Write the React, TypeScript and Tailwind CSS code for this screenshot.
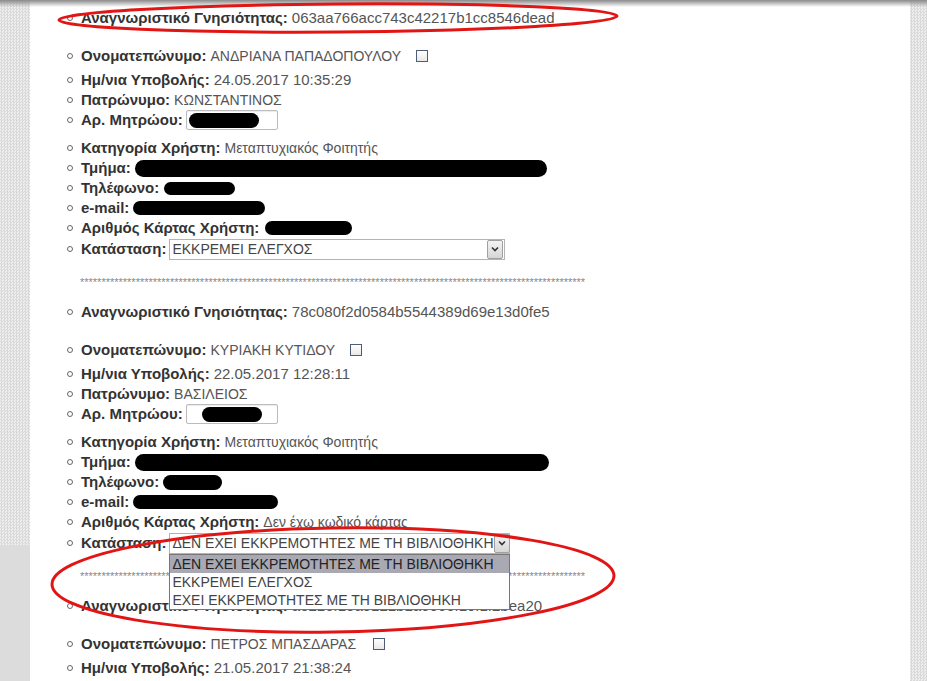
import React from 'react';

const checker =
  'bg-[repeating-conic-gradient(#d9d9d9_0%_25%,#eeeeee_0%_50%)] bg-[length:3px_3px]';

interface RowProps {
  label: string;
  children?: React.ReactNode;
  className?: string;
}

const Row = ({ label, children, className = '' }: RowProps) => (
  <li className={`flex h-5 items-center whitespace-nowrap ${className}`}>
    <span className="ml-[37px] mr-[8px] h-[6px] w-[6px] shrink-0 rounded-full border border-[#666]" />
    <span className="font-bold text-[#333]">{label}</span>
    <span className="ml-[4px] flex items-center text-[#555]">{children}</span>
  </li>
);

// greek values render a bit narrower than the digits in the shot
const G = ({ children }: { children: React.ReactNode }) => (
  <span className="text-[14px]">{children}</span>
);

const Blob = ({ w, h, ml = 0 }: { w: number; h: number; ml?: number }) => (
  <span
    className="inline-block rounded-full bg-black"
    style={{ width: w, height: h, marginLeft: ml }}
  />
);

const Checkbox = ({ ml }: { ml: number }) => (
  <span
    className="inline-block h-[12px] w-[12px] border border-[#4d5d75] bg-gradient-to-b from-white to-[#e8e8e8]"
    style={{ marginLeft: ml }}
  />
);

const Arrow = () => (
  <span className="flex h-[19px] w-[16px] shrink-0 items-center justify-center rounded-[2px] border border-[#a0a0a0] bg-gradient-to-b from-[#f4f4f4] to-[#d6d6d6]">
    <svg width="8" height="6" viewBox="0 0 8 6">
      <path d="M1 1.5 L4 4.5 L7 1.5" fill="none" stroke="#333" strokeWidth="1.6" />
    </svg>
  </span>
);

const options = [
  'ΔΕΝ ΕΧΕΙ ΕΚΚΡΕΜΟΤΗΤΕΣ ΜΕ ΤΗ ΒΙΒΛΙΟΘΗΚΗ',
  'ΕΚΚΡΕΜΕΙ ΕΛΕΓΧΟΣ',
  'ΕΧΕΙ ΕΚΚΡΕΜΟΤΗΤΕΣ ΜΕ ΤΗ ΒΙΒΛΙΟΘΗΚΗ',
];

const Select = ({ value, width, open = false }: { value: string; width: number; open?: boolean }) => (
  <span className="relative ml-[-1px] inline-block text-[14px]" style={{ width }}>
    <span className="flex h-[21px] items-center justify-between border border-[#b4b4b4] bg-white pl-[2px] pr-[1px] text-[#444]">
      <span>{value}</span>
      <Arrow />
    </span>
    {open && (
      <span className="absolute left-0 top-full z-10 flex w-full flex-col border border-[#777] bg-white text-[#444]">
        {options.map((o, i) => (
          <span
            key={o}
            className={`h-[18px] pl-[2px] leading-[18px] ${i === 0 ? 'bg-[#a9a9b3] text-[#222]' : ''}`}
          >
            {o}
          </span>
        ))}
      </span>
    )}
  </span>
);

const Stars = () => (
  <li className="mt-[13px] flex h-5 items-center">
    <span className="ml-[50px] w-[505px] overflow-hidden whitespace-nowrap text-[11px] leading-[11px] text-[#888]">
      {'*'.repeat(118)}
    </span>
  </li>
);

const AmInput = ({ blob }: { blob: { ml: number; w: number } }) => (
  <span className="ml-[-1px] flex h-[20px] w-[92px] items-center rounded-[2px] border border-[#bcbcbc] bg-white shadow-[inset_0_1px_1px_rgba(0,0,0,0.08)]">
    <Blob w={blob.w} h={15} ml={blob.ml} />
  </span>
);

export default function App() {
  return (
    <div
      className="relative flex h-[681px] w-[927px] overflow-hidden bg-white text-[15px]"
      style={{ fontFamily: '"Liberation Sans", Arial, sans-serif' }}
    >
      <div className="flex w-[30px] shrink-0 flex-col">
        <div className={`flex-1 ${checker}`} />
        <div className="h-[136px] bg-[#dcdcdc]" />
      </div>

      <div className="flex-1 bg-white">
        <ul className="pt-[8px]">
          {/* record 1 */}
          <Row label="Αναγνωριστικό Γνησιότητας:">063aa766acc743c42217b1cc8546dead</Row>
          <Row label="Ονοματεπώνυμο:" className="mt-[18px]">
            <G>ΑΝΔΡΙΑΝΑ ΠΑΠΑΔΟΠΟΥΛΟΥ</G>
            <Checkbox ml={15} />
          </Row>
          <Row label="Ημ/νια Υποβολής:" className="mt-[4px]">24.05.2017 10:35:29</Row>
          <Row label="Πατρώνυμο:"><G>ΚΩΝΣΤΑΝΤΙΝΟΣ</G></Row>
          <Row label="Αρ. Μητρώου:">
            <AmInput blob={{ ml: 2, w: 70 }} />
          </Row>
          <Row label="Κατηγορία Χρήστη:" className="mt-[8px]"><G>Μεταπτυχιακός Φοιτητής</G></Row>
          <Row label="Τμήμα:"><Blob w={412} h={17} /></Row>
          <Row label="Τηλέφωνο:"><Blob w={71} h={13} ml={1} /></Row>
          <Row label="e-mail:"><Blob w={132} h={14} /></Row>
          <Row label="Αριθμός Κάρτας Χρήστη:"><Blob w={87} h={14} ml={2} /></Row>
          <Row label="Κατάσταση:" className="mt-[1px]">
            <Select value="ΕΚΚΡΕΜΕΙ ΕΛΕΓΧΟΣ" width={336} />
          </Row>
          <Stars />

          {/* record 2 */}
          <Row label="Αναγνωριστικό Γνησιότητας:" className="mt-[10px]">78c080f2d0584b5544389d69e13d0fe5</Row>
          <Row label="Ονοματεπώνυμο:" className="mt-[18px]">
            <G>ΚΥΡΙΑΚΗ ΚΥΤΙΔΟΥ</G>
            <Checkbox ml={15} />
          </Row>
          <Row label="Ημ/νια Υποβολής:" className="mt-[4px]">22.05.2017 12:28:11</Row>
          <Row label="Πατρώνυμο:"><G>ΒΑΣΙΛΕΙΟΣ</G></Row>
          <Row label="Αρ. Μητρώου:">
            <AmInput blob={{ ml: 15, w: 60 }} />
          </Row>
          <Row label="Κατηγορία Χρήστη:" className="mt-[8px]"><G>Μεταπτυχιακός Φοιτητής</G></Row>
          <Row label="Τμήμα:"><Blob w={414} h={17} /></Row>
          <Row label="Τηλέφωνο:"><Blob w={59} h={15} /></Row>
          <Row label="e-mail:"><Blob w={145} h={14} /></Row>
          <Row label="Αριθμός Κάρτας Χρήστη:"><G>Δεν έχω κωδικό κάρτας</G></Row>
          <Row label="Κατάσταση:" className="relative z-10 mt-[1px]">
            <Select value="ΔΕΝ ΕΧΕΙ ΕΚΚΡΕΜΟΤΗΤΕΣ ΜΕ ΤΗ ΒΙΒΛΙΟΘΗΚΗ" width={341} open />
          </Row>
          <Stars />

          {/* record 3 */}
          <Row label="Αναγνωριστικό Γνησιότητας:" className="mt-[10px]">a6216f1ea9121b1a6066f10f1f2bea20</Row>
          <Row label="Ονοματεπώνυμο:" className="mt-[18px]">
            <G>ΠΕΤΡΟΣ ΜΠΑΣΔΑΡΑΣ</G>
            <Checkbox ml={17} />
          </Row>
          <Row label="Ημ/νια Υποβολής:" className="mt-[4px]">21.05.2017 21:38:24</Row>
        </ul>
      </div>

      <div className={`w-[17px] shrink-0 ${checker}`} />

      {/* top shadow */}
      <div className="pointer-events-none absolute left-0 top-0 h-[7px] w-full bg-gradient-to-b from-[#8a8a8a] to-transparent" />

      {/* red annotation ellipses */}
      <svg className="pointer-events-none absolute left-0 top-0 z-20" width="927" height="681">
        <ellipse cx="338" cy="18" rx="279" ry="14" fill="none" stroke="#e21515" strokeWidth="3" transform="rotate(-0.4 338 18)" />
        <ellipse cx="333" cy="580" rx="281" ry="52" fill="none" stroke="#e21515" strokeWidth="3" transform="rotate(-0.9 333 580)" />
      </svg>
    </div>
  );
}
